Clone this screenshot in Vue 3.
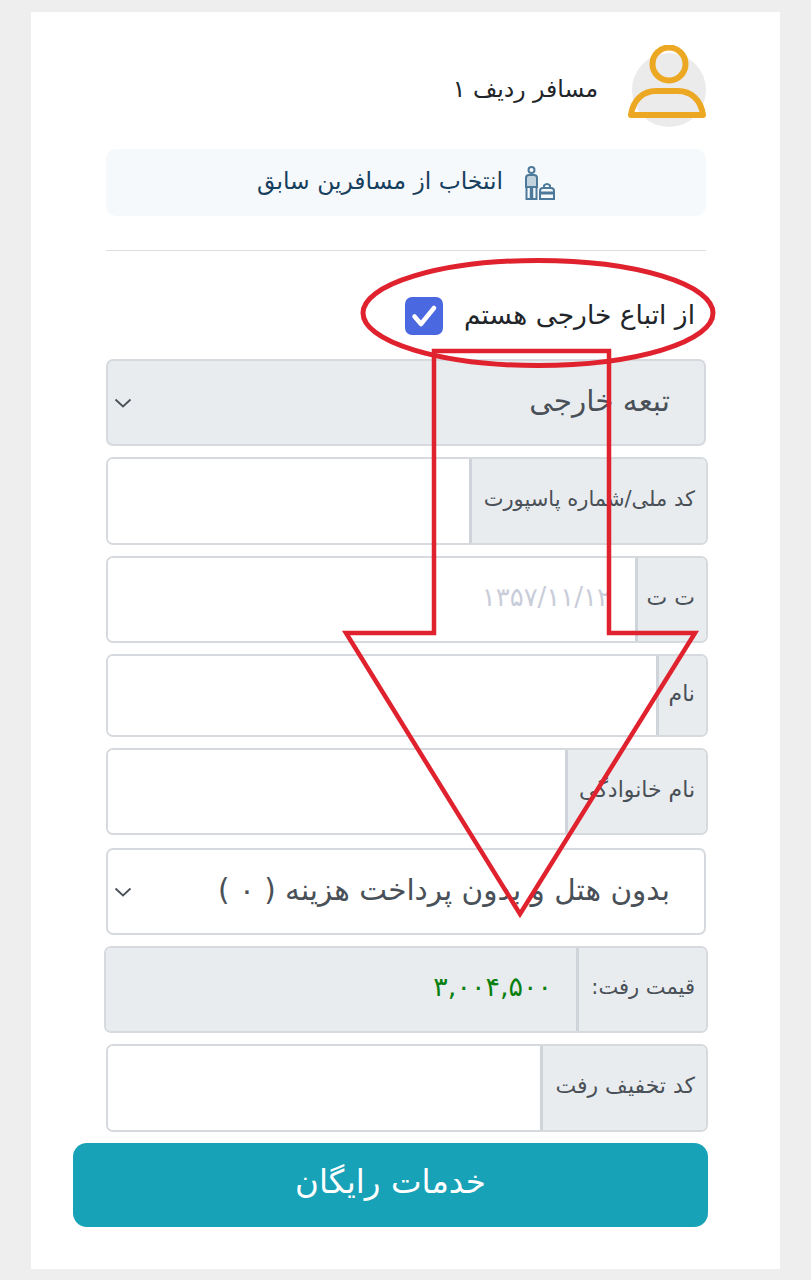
<script setup>
const fields = [
  { label: 'کد ملی/شماره پاسپورت', h: 88, w: 237, gap: 11, tight: true },
  { label: 'ت ت', h: 87, w: 71, gap: 11, placeholder: '۱۳۵۷/۱۱/۱۲' },
  { label: 'نام', h: 83, w: 50, gap: 11 },
  { label: 'نام خانوادگی', h: 87, w: 141, gap: 13 },
]
</script>

<template>
  <div class="page" dir="rtl">
    <main class="card">
      <header class="passenger">
        <svg class="avatar" viewBox="0 0 78 84" aria-hidden="true">
          <circle cx="41" cy="45" r="37" fill="#ebebeb" />
          <circle cx="41" cy="19" r="16.500" fill="none" stroke="#eca822" stroke-width="6" />
          <path d="M3 70 C5 55 15 46 28 46 H50 C63 46 73 55 75 70 Z" fill="none" stroke="#eca822" stroke-width="6" stroke-linejoin="round" />
        </svg>
        <span class="passenger-title">مسافر ردیف ۱</span>
      </header>

      <button class="previous">
        <svg class="bag-icon" viewBox="0 0 32 34" aria-hidden="true">
          <g fill="none" stroke="#4d7a9a" stroke-width="2">
            <circle cx="8.500" cy="4" r="3" />
            <path d="M3 12 Q3 9 6 9 H11 Q14 9 14 12 V21 H3 Z" fill="#c3d2dd" />
            <path d="M3.500 21 V33 H7.800 V21 M9.200 21 V33 H13.500 V21" />
            <path d="M17 33 V25 Q17 22 20 22 H28 Q31 22 31 25 V33 Z" />
            <path d="M21 22 V19.500 Q24 16.500 27 19.500 V22" />
            <path d="M17 27 H31" stroke-width="3" />
          </g>
        </svg>
        <span class="previous-text">انتخاب از مسافرین سابق</span>
      </button>

      <hr class="divider" />

      <label class="foreign">
        <span>از اتباع خارجی هستم</span>
        <span class="check">
          <svg viewBox="0 0 38 38" aria-hidden="true">
            <path d="M9.500 19.500 L16 27 L29 11" fill="none" stroke="#fff" stroke-width="4.500" stroke-linecap="round" stroke-linejoin="round" />
          </svg>
        </span>
      </label>

      <div class="select disabled">
        <span>تبعه خارجی</span>
        <svg class="chevron" viewBox="0 0 18 10" aria-hidden="true"><path d="M1.500 1.500 L9 8.500 L16.500 1.500" /></svg>
      </div>

      <div v-for="f in fields" :key="f.label" class="group" :style="{ height: f.h + 'px', marginBottom: f.gap + 'px' }">
        <span class="addon" :class="{ tight: f.tight }" :style="{ width: f.w + 'px' }"><span class="label">{{ f.label }}</span></span>
        <span class="input"><span v-if="f.placeholder" class="placeholder">{{ f.placeholder }}</span></span>
      </div>

      <div class="select">
        <span>بدون هتل و بدون پرداخت هزینه ( ۰ )</span>
        <svg class="chevron" viewBox="0 0 18 10" aria-hidden="true"><path d="M1.500 1.500 L9 8.500 L16.500 1.500" /></svg>
      </div>

      <div class="group price">
        <span class="addon tight" :style="{ width: '130px' }"><span class="label">قیمت رفت:</span></span>
        <span class="input readonly"><b>۳,۰۰۴,۵۰۰</b></span>
      </div>

      <div class="group discount">
        <span class="addon" :style="{ width: '166px' }"><span class="label">کد تخفیف رفت</span></span>
        <span class="input"></span>
      </div>

      <button class="submit">خدمات رایگان</button>
    </main>

    <svg class="annotation" viewBox="0 0 811 1280" aria-hidden="true">
      <ellipse cx="538" cy="313" rx="175" ry="52.500" fill="none" stroke="#e0222f" stroke-width="5" />
      <path d="M434 351 H609 V633 H695 L520 914 L346 633 H434 Z" fill="none" stroke="#e0222f" stroke-width="4.500" stroke-linejoin="miter" />
    </svg>
  </div>
</template>

<style>
html, body { margin: 0; background: #eeeeee; }
</style>

<style scoped>
.page {
  position: relative;
  width: 811px;
  height: 1280px;
  box-sizing: border-box;
  padding: 12px 31px 11px;
  background: #eeeeee;
  font-family: "DejaVu Sans", sans-serif;
  color: #212529;
  overflow: hidden;
}
.card {
  box-sizing: border-box;
  height: 100%;
  background: #fff;
  padding: 33px 74px 0 75px;
  display: flex;
  flex-direction: column;
}
.passenger {
  display: flex;
  align-items: center;
  gap: 30px;
  height: 84px;
  margin-bottom: 20px;
}
.avatar { width: 78px; height: 84px; flex: none; }
.passenger-title { font-size: 23.500px; padding-top: 4px; }
.previous {
  height: 67px;
  border: 0;
  border-radius: 10px;
  background: #f6f9fb;
  color: #163f5f;
  font: 23.400px "DejaVu Sans", sans-serif;
  display: flex;
  align-items: center;
  justify-content: center;
  gap: 20px;
  padding: 0;
}
.previous-text { padding-bottom: 4px; }
.bag-icon { width: 32px; height: 34px; flex: none; }
.divider {
  width: 100%;
  height: 1px;
  border: 0;
  background: #dedede;
  margin: 34px 0 45px;
}
.foreign {
  display: flex;
  align-items: center;
  gap: 21px;
  height: 40px;
  padding-right: 11px;
  margin-bottom: 23px;
  font-size: 26.500px;
}
.foreign > span:first-child { padding-bottom: 4px; }
.check {
  width: 38px;
  height: 38px;
  border-radius: 7px;
  background: #4a69e0;
  flex: none;
}
.check svg { display: block; width: 38px; height: 38px; }
.select {
  box-sizing: border-box;
  height: 87px;
  border: 2px solid #d6dade;
  border-radius: 7px;
  background: #fff;
  color: #495057;
  font-size: 29.500px;
  display: flex;
  align-items: center;
  justify-content: space-between;
  padding: 0 34px 0 6px;
  margin-bottom: 11px;
}
.select > span { padding-bottom: 3px; }
.select.disabled { background: #e9ecef; }
.chevron { width: 18px; height: 10px; fill: none; stroke: #495057; stroke-width: 1.800; flex: none; }
.group {
  box-sizing: border-box;
  display: flex;
  border: 2px solid #d6dade;
  border-radius: 7px;
  overflow: hidden;
  margin-right: -2px;
}
.addon {
  box-sizing: border-box;
  flex: none;
  background: #e9ecef;
  border-left: 3px solid #ced4da;
  color: #495057;
  font-size: 22px;
  display: flex;
  align-items: center;
  justify-content: flex-start;
  padding-right: 11px;
  white-space: nowrap;
}
.addon.tight { font-size: 21px; }
.label { padding-bottom: 5px; }
.input { flex: 1; display: flex; align-items: center; background: #fff; padding-right: 24px; }
.placeholder { color: #c9cdd9; font-size: 26px; padding-bottom: 6px; }
.readonly { background: #e9ecef; }
.readonly b { color: #0a800f; font-size: 27px; font-weight: 400; padding-bottom: 6px; }
.price { height: 87px; margin: 0 -2px 11px; margin-left: -2px; }
.discount { height: 88px; margin-bottom: 11px; }
.submit {
  height: 84px;
  margin: 0 -2px 0 -33px;
  border: 0;
  border-radius: 14px;
  background: #18a2b8;
  color: #fff;
  font: 32.500px "DejaVu Sans", sans-serif;
  padding: 0 0 6px;
}
.annotation {
  position: absolute;
  inset: 0;
  width: 811px;
  height: 1280px;
  pointer-events: none;
}
</style>
